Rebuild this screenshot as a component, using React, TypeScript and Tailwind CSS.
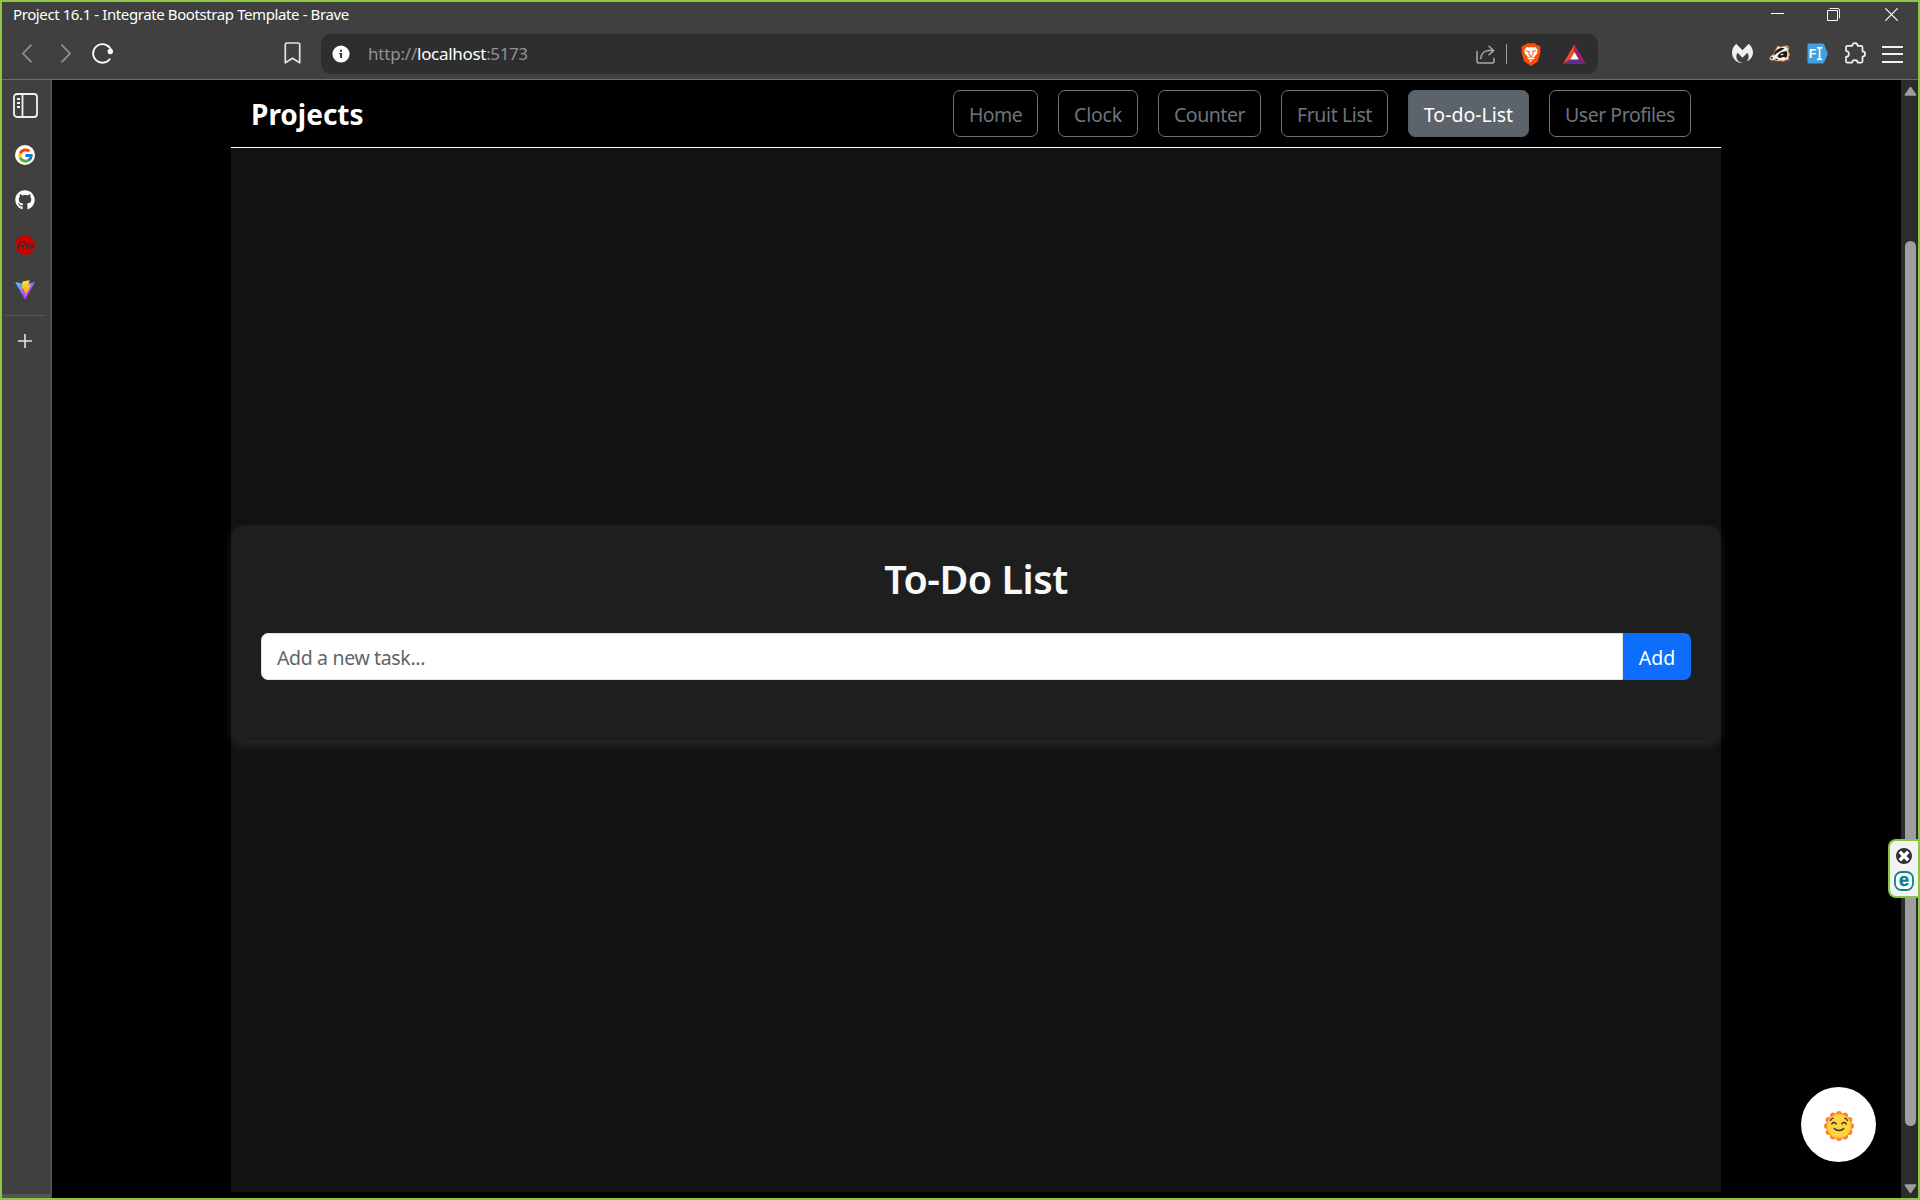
import type { ReactNode } from "react";
import { FaGithub } from "react-icons/fa";
import { FcGoogle } from "react-icons/fc";
import { SiMalwarebytes } from "react-icons/si";

function ViteLogo() {
  return (
    <svg viewBox="0 0 410 404" className="h-5 w-5">
      <defs>
        <linearGradient id="v1" x1="6" y1="33" x2="235" y2="344" gradientUnits="userSpaceOnUse">
          <stop stopColor="#41D1FF" />
          <stop offset="1" stopColor="#BD34FE" />
        </linearGradient>
        <linearGradient id="v2" x1="194.6" y1="8.8" x2="236" y2="293" gradientUnits="userSpaceOnUse">
          <stop stopColor="#FFEA83" />
          <stop offset="0.083" stopColor="#FFDD35" />
          <stop offset="1" stopColor="#FFA800" />
        </linearGradient>
      </defs>
      <path fill="url(#v1)" d="M399.641 59.5246L215.643 388.545C211.844 395.338 202.084 395.378 198.228 388.618L10.5817 59.5563C6.38087 52.1896 12.6802 43.2665 21.0281 44.7586L205.223 77.6824C206.398 77.8924 207.601 77.8904 208.776 77.6763L389.119 44.8058C397.439 43.2894 403.768 52.1434 399.641 59.5246Z" />
      <path fill="url(#v2)" d="M292.965 1.5744L156.801 28.2552C154.563 28.6937 152.906 30.5903 152.771 32.8664L144.395 174.33C144.198 177.662 147.258 180.248 150.51 179.498L188.42 170.749C191.967 169.931 195.172 173.055 194.443 176.622L183.18 231.775C182.422 235.487 185.907 238.661 189.532 237.56L212.947 230.446C216.577 229.344 220.065 232.527 219.297 236.242L201.398 322.875C200.278 328.294 207.486 331.249 210.492 326.603L212.5 323.5L323.454 102.072C325.312 98.3645 322.108 94.137 318.036 94.9228L279.014 102.454C275.347 103.161 272.227 99.746 273.262 96.1583L298.731 7.86689C299.767 4.27314 296.636 0.855181 292.965 1.5744Z" />
    </svg>
  );
}

function BraveLion() {
  return (
    <svg viewBox="0 0 20 23" className="h-[23px] w-5">
      <path fill="#fb4f05" d="M6 .3h8l1.8 2 1.7-.3 2.2 2.7-.7 2 .6 2.1-2.3 8.2c-.3 1-.9 1.700-1.700 2.300L10 23l-5.600-3.700c-.8-.6-1.400-1.300-1.700-2.300L.4 8.800 1 6.700.3 4.700 2.500 2l1.700.3z" />
      <path fill="#fff" d="M5.600 4.100 7.900 4.500l2.100-.5 2.100.5 2.300-.4 2.500 3.100-.8 1.400.4 1.500-3.400 4 .4 1.600-2.200.7-1.300 2.400L10 19.200l-1.300-.9.1-1.500-2.300-1.100.4-1.600-3.400-4 .4-1.500-.8-1.400z" />
      <path fill="none" stroke="#fb4f05" strokeWidth="1" d="m4.900 7.600 3.300.9-.3 2.300.9 1.700M15.100 7.600l-3.300.9.3 2.300-.9 1.700M7.400 14.700 10 13.600l2.600 1.100M10 13.600v-2M9 17l1-.6 1 .6" />
    </svg>
  );
}

function BatTriangle() {
  return (
    <svg viewBox="0 0 23 20" className="h-5 w-[23px]">
      <path fill="#ff4724" d="M11.500 0 0 20l7.200-4.600 4.300-7.400z" />
      <path fill="#9e1f63" d="M11.500 0 23 20l-7.200-4.600L11.500 8z" />
      <path fill="#662d91" d="M0 20h23l-7.200-4.600H7.200z" />
      <path fill="#fff" d="m11.500 8 4.300 7.400H7.200z" />
    </svg>
  );
}

function Badger() {
  return (
    <svg viewBox="0 0 21 17" className="h-[17px] w-[21px]">
      <path fill="#f4f1ea" stroke="#e08a3c" strokeWidth=".9" strokeLinejoin="round" d="M7.500 3.500 9 1l2.500 1.200 4-.9L18.800 1l1 2.200-.9 2.500 1.600 3.800-1.200 2.500.3 2.500-3.100.5-1.500 1.200-3-.5-4 .3-2.500-1-3.500.2L.6 13.800l1-2.300L5 9z" />
      <path fill="#1b1b1b" d="M7.800 5c2.200-1.900 4.700-2.400 7.700-1.500L12 5.700C9.300 7 7 8.600 4.800 10.800 4.900 8.600 6 6.500 7.800 5zM8.500 11.200c1.500-3 5-5 9-5.200 1.300 2.300 1.200 4.700-.5 7-1.200-1-2.500-1.200-4-.4-1.700.9-3.700.5-4.500-1.400zM1.500 12.300l2.200-.4.300 1.500-1.600.4zM5.500 13.700l4 .3-2 1.200zM17.300 2.300l1.300-.3-.2 1.700z" />
      <path fill="#fff" d="m11.500 9.600 2.700-1.200.3 1-2.500 1.200z" />
    </svg>
  );
}

function RenameExtension() {
  return (
    <svg viewBox="0 0 21 21" className="h-[21px] w-[21px]">
      <path fill="#41a1e0" d="M2 .5h13.500c.8 0 1.300.3 1.700 1L20.300 9c.4 1 .4 2 0 3l-3.100 7.500c-.4.700-.9 1-1.700 1H2c-1 0-1.500-.5-1.500-1.500V2C.5 1 1 .5 2 .5z" />
      <path fill="none" stroke="#fff" strokeWidth="1.700" d="M10 4.600c1.500 0 2.600.5 2.600 1.500v8.800c0 1-1.100 1.500-2.600 1.500M15.200 4.600c-1.500 0-2.600.5-2.600 1.500v8.800c0 1 1.100 1.500 2.600 1.500" />
      <text x="1.800" y="15" fill="#fff" fontSize="12.500" fontWeight="700" fontFamily="Liberation Sans, sans-serif">F</text>
    </svg>
  );
}

function SunFace() {
  const rays = Array.from({ length: 12 }, (_, i) => (i * Math.PI) / 6);
  return (
    <svg viewBox="0 0 30 30" className="h-[30px] w-[30px]">
      {rays.map((a) => (
        <circle key={a} cx={15 + 12 * Math.sin(a)} cy={15 - 12 * Math.cos(a)} r="3" fill="#ff822d" />
      ))}
      <circle cx="15" cy="15" r="12.200" fill="#ffb03a" />
      <circle cx="15" cy="15" r="11.500" fill="#ffd43d" />
      <g fill="none" stroke="#402a32" strokeLinecap="round" strokeWidth="1.400">
        <path d="M7.800 13c.5-2 3.600-2 4.300 0M17.900 13c.7-2 3.800-2 4.300 0M10.200 17.500c2.300 2.700 7.300 2.700 9.600 0" />
        <path strokeWidth="1.100" d="M6.300 9.700c.6-1.500 1.600-2.300 3-2.600M23.700 9.700c-.6-1.500-1.600-2.300-3-2.600" />
      </g>
    </svg>
  );
}

function TitleBar() {
  return (
    <div className="flex h-6 shrink-0 items-center pl-[11px] pr-5">
      <span className="text-[15px] leading-none tracking-[-0.4px] text-white">Project 16.1 - Integrate Bootstrap Template - Brave</span>
      <div className="ml-auto flex items-center text-white">
        <svg viewBox="0 0 13 13" className="mr-[43px] h-[13px] w-[13px]"><path d="M0 5.500h13" stroke="currentColor" /></svg>
        <svg viewBox="0 0 13 13" fill="none" stroke="currentColor" className="mr-[45px] h-[13px] w-[13px]">
          <path d="M.5 2.500h10v10H.5z" /><path d="M2.500.5h8.500a1.500 1.500 0 0 1 1.500 1.500v8.500" strokeWidth=".9" />
        </svg>
        <svg viewBox="0 0 13 13" className="h-[13px] w-[13px]"><path d="m.3.300 12.400 12.400M12.700.300.300 12.700" stroke="currentColor" strokeWidth="1.200" /></svg>
      </div>
    </div>
  );
}

function Toolbar() {
  return (
    <div className="flex h-[54px] shrink-0 items-start border-b border-[#6e6e6e] pt-2">
      <div className="flex h-[38px] w-[319px] items-center pl-5 text-white">
        <svg viewBox="0 0 10 19" fill="none" stroke="#8f8f8f" strokeWidth="1.700" className="mr-[29px] h-[19px] w-[10px]"><path d="M9.500.7 1 9.500l8.500 8.800" /></svg>
        <svg viewBox="0 0 10 19" fill="none" stroke="#8f8f8f" strokeWidth="1.700" className="mr-[21px] h-[19px] w-[10px]"><path d="M.5.700 9 9.500.5 18.300" /></svg>
        <svg viewBox="0 0 21 21" fill="none" className="mr-[171px] h-[21px] w-[21px]">
          <path d="M17.300 4.200A9.300 9.300 0 1 0 17.700 16.200" stroke="currentColor" strokeWidth="1.800" strokeLinecap="round" />
          <circle cx="18.300" cy="8.500" r="2.700" fill="currentColor" />
          <path d="M15.500 2.600 19 6" stroke="currentColor" strokeWidth="1.600" />
        </svg>
        <svg viewBox="0 0 17 22" fill="none" stroke="#e4e4e4" strokeWidth="1.700" strokeLinejoin="round" className="h-[22px] w-[17px]">
          <path d="M3 1h11c1 0 1.700.7 1.700 1.700v18.100l-7.200-4.600-7.200 4.600V2.700C1.300 1.700 2 1 3 1z" />
        </svg>
      </div>
      <div className="flex h-10 w-[1277px] items-center rounded-[10px] bg-[#2e2e31] pl-[11px] pr-3">
        <svg viewBox="0 0 18 18" className="h-[18px] w-[18px]">
          <circle cx="9" cy="9" r="8.600" fill="#fff" />
          <path d="M8 4.700h2v2H8zM7.300 8H10v5H8.100V9.300h-.8z" fill="#2e2e31" />
        </svg>
        <div className="mb-0.5 ml-[18px] flex text-[17px] leading-none text-[#929294]">
          <span className="tracking-[-0.2px]">http://</span>
          <span className="tracking-[-0.3px] text-white">localhost</span>
          <span className="tracking-[-0.4px]">:5173</span>
        </div>
        <div className="ml-auto flex items-center">
          <svg viewBox="0 0 19 19" fill="none" stroke="#a9a9ab" strokeWidth="1.500" strokeLinejoin="round" strokeLinecap="round" className="h-[19px] w-[19px]">
            <path d="M1 6.500v9.800C1 17.500 1.600 18 2.800 18h13.400c1.200 0 1.800-.5 1.800-1.800v-2.700" />
            <path d="M4.800 13.500C5 8.800 8.300 5.800 13 5.600h4.500M13 1.300l4.700 4.300L13 9.800" />
          </svg>
          <div className="ml-[11px] mr-[14px] h-5 w-px bg-[#a0a0a2]" />
          <BraveLion />
          <div className="w-[22px]" />
          <BatTriangle />
        </div>
      </div>
      <div className="flex h-[38px] items-center pl-[134px] text-[#f0f0f0]">
        <SiMalwarebytes className="mr-[16px] h-[21px] w-[21px]" />
        <Badger />
        <div className="w-[17px]" />
        <RenameExtension />
        <svg viewBox="0 0 21 22" fill="none" stroke="currentColor" strokeWidth="1.700" strokeLinejoin="round" className="ml-[17px] h-[22px] w-[21px]">
          <path d="M2.500 3.800h4.700a2.700 2.700 0 1 1 5.400 0H16c.9 0 1.500.6 1.500 1.500v4a2.600 2.600 0 0 1 0 5.200v4.700c0 .9-.6 1.500-1.500 1.500h-3.300c-.2-3.400-5.400-3.400-5.600 0H2.500c-.9 0-1.500-.6-1.500-1.500v-4.400c3.800-.3 3.800-5.500 0-5.800V5.300c0-.9.6-1.500 1.500-1.500z" />
        </svg>
        <div className="ml-[16px] mt-0.5 flex w-[21px] flex-col gap-[5.500px]">
          <div className="h-0.5 bg-[#f0f0f0]" /><div className="h-0.5 bg-[#f0f0f0]" /><div className="h-0.5 bg-[#f0f0f0]" />
        </div>
      </div>
    </div>
  );
}

function Sidebar() {
  return (
    <div className="flex w-[50px] shrink-0 flex-col items-center border-r-2 border-[#525255] bg-[#404040] pt-[13px] text-white">
      <svg viewBox="0 0 25 25" fill="none" stroke="#efefef" strokeWidth="1.800" className="mr-px h-[25px] w-[25px]">
        <rect x="1" y="1" width="23" height="23" rx="3" />
        <path d="M9.500 1v23M4 6h3M4 10h3M4 14h3" />
      </svg>
      <div className="mr-0.5 mt-[27px] flex h-5 w-5 items-center justify-center rounded-full bg-white"><FcGoogle className="h-[17px] w-[17px]" /></div>
      <FaGithub className="mr-0.5 mt-[25px] h-5 w-5" />
      <svg viewBox="0 0 20 20" className="mr-0.5 mt-[25px] h-5 w-5">
        <circle cx="10" cy="10" r="10" fill="#cc0000" />
        <text x="9.800" y="14" textAnchor="middle" fontSize="11.500" fontWeight="700" fontStyle="italic" fontFamily="Liberation Sans, sans-serif" fill="#452c2c">Rw</text>
      </svg>
      <div className="mr-0.5 mt-[25px]"><ViteLogo /></div>
      <div className="mr-0.5 mt-[15px] h-px w-10 bg-[#5b5b5b]" />
      <svg viewBox="0 0 14 14" className="mr-0.5 mt-[18px] h-3.5 w-3.5"><path d="M7 0v14M0 7h14" stroke="#e4e4e4" strokeWidth="1.600" /></svg>
      <div className="mt-auto h-1 w-full bg-[#56565a]" />
    </div>
  );
}

function NavLink({ className, children }: { className: string; children: ReactNode }) {
  return (
    <a className={`flex h-[47px] items-center justify-center whitespace-nowrap rounded-[7px] border pt-[3px] text-[19.5px] ${className}`}>
      {children}
    </a>
  );
}

function TodoPage() {
  return (
    <main className="flex grow justify-center bg-black">
      <div className="mb-1.5 ml-[179px] mr-[180px] flex w-[1490px] flex-col bg-[#121212]">
        <nav className="flex h-[68px] items-center border-b border-white bg-black pl-5 pr-[30px]">
          <span className="text-[28px] font-bold leading-none text-white">Projects</span>
          <div className="ml-auto flex gap-5">
            <NavLink className="w-[85px] border-[#6c757d] tracking-[-0.6px] text-[#6c757d]">Home</NavLink>
            <NavLink className="w-[80px] border-[#6c757d] tracking-[-0.2px] text-[#6c757d]">Clock</NavLink>
            <NavLink className="w-[103px] border-[#6c757d] tracking-[-0.47px] text-[#6c757d]">Counter</NavLink>
            <NavLink className="w-[107px] border-[#6c757d] tracking-[-0.4px] text-[#6c757d]">Fruit List</NavLink>
            <NavLink className="w-[121px] border-[#565e64] bg-[#5c636a] text-white">To-do-List</NavLink>
            <NavLink className="w-[142px] border-[#6c757d] tracking-[-0.47px] text-[#6c757d]">User Profiles</NavLink>
          </div>
        </nav>
        <section className="relative mt-[377px] h-[215px] rounded-[15px] bg-[#1e1e1e] px-[30px] pt-[30px] shadow-[0_5px_12px_rgba(255,255,255,0.1)]">
          <h1 className="pt-px text-center text-[39.5px] font-semibold leading-[47px] tracking-[-0.5px] text-[#f8f9fa]">To-Do List</h1>
          <div className="mt-[30px] flex h-[47px]">
            <input
              placeholder="Add a new task..."
              className="min-w-0 grow rounded-l-[7px] border border-[#dee2e6] bg-white pl-[15px] pt-[3px] text-[19.5px] tracking-[-0.35px] text-black placeholder:text-[#5f656b]"
            />
            <button className="w-[68px] rounded-r-[7px] bg-[#0d6efd] pt-[3px] text-[19.5px] text-white">Add</button>
          </div>
        </section>
      </div>
    </main>
  );
}

function Scrollbar() {
  return (
    <div className="flex w-[17px] shrink-0 flex-col items-center bg-[#2c2c2c] pb-1 pl-0.5 pt-1.5">
      <svg viewBox="0 0 13 10" className="h-2.5 w-[13px]"><path d="M6.500 1.500 11.700 9H1.300z" fill="#9f9f9f" stroke="#9f9f9f" strokeWidth="1.500" strokeLinejoin="round" /></svg>
      <div className="mt-[145px] h-[885px] w-[11px] rounded-full bg-[#9f9f9f]" />
      <svg viewBox="0 0 13 10" className="mt-auto h-2.5 w-[13px]"><path d="M6.500 8.500 11.700 1H1.300z" fill="#9f9f9f" stroke="#9f9f9f" strokeWidth="1.500" strokeLinejoin="round" /></svg>
    </div>
  );
}

export default function App() {
  return (
    <div className="relative flex h-[1200px] w-[1920px] flex-col overflow-hidden border-2 border-[#8cc63f] bg-[#404040] font-['Noto_Sans',sans-serif]">
      <TitleBar />
      <Toolbar />
      <div className="flex min-h-0 grow">
        <Sidebar />
        <TodoPage />
        <Scrollbar />
      </div>
      <div className="absolute left-[1886px] top-[837px] flex h-[59px] w-[32px] flex-col items-center rounded-l-[8px] border-2 border-r-0 border-[#8cc63f] bg-[#f3f3f3] pr-0.5 pt-[7px]">
        <svg viewBox="0 0 16 16" className="h-4 w-4">
          <circle cx="8" cy="8" r="8" fill="#2f3038" />
          <path d="m5 5 6 6M11 5l-6 6" stroke="#fff" strokeWidth="3.400" strokeLinecap="square" />
        </svg>
        <svg viewBox="0 0 20 20" className="mt-[7px] h-5 w-5">
          <rect x="1" y="1" width="18" height="18" rx="6.500" fill="#fff" stroke="#0b8490" strokeWidth="1.800" />
          <text x="10" y="14.500" textAnchor="middle" fontSize="18" fontWeight="700" fontFamily="Liberation Sans, sans-serif" fill="#0b8490" stroke="#0b8490" strokeWidth=".5">e</text>
        </svg>
      </div>
      <button className="absolute left-[1799px] top-[1085px] flex h-[75px] w-[75px] items-center justify-center rounded-full bg-white pt-[2px]">
        <SunFace />
      </button>
    </div>
  );
}
